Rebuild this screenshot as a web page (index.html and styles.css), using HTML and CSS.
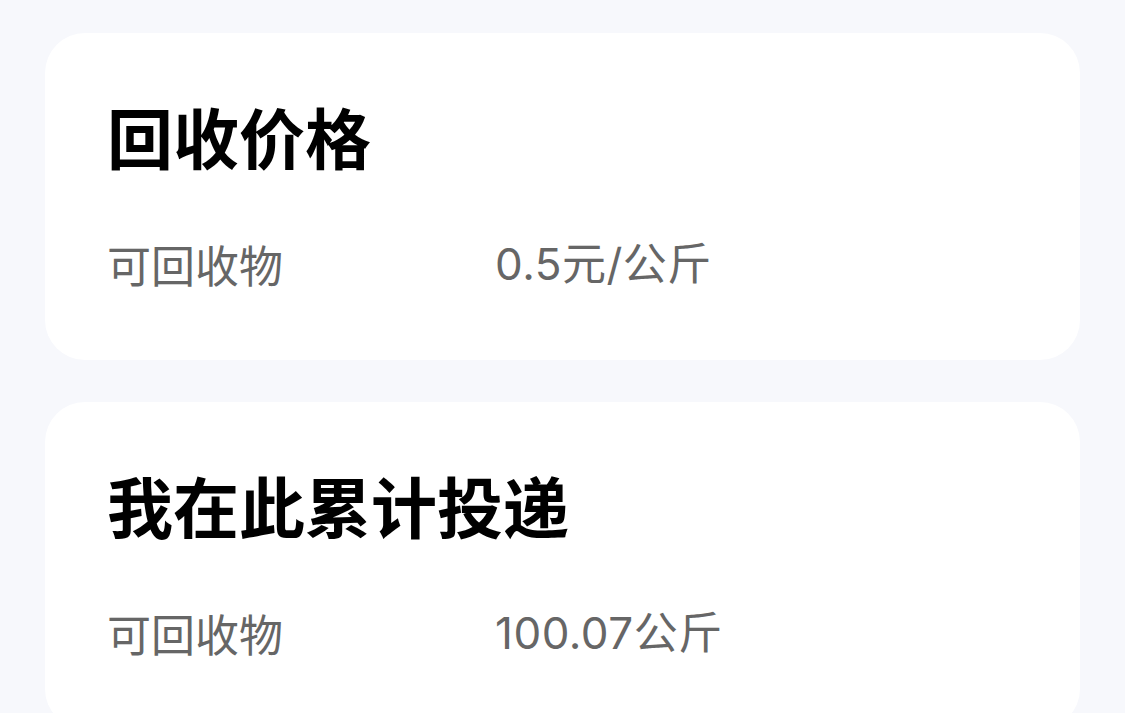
FILE: index.html
```html
<!DOCTYPE html>
<html lang="zh-CN">
<head>
    <meta charset="UTF-8">
    <title>回收价格</title>
    <link rel="stylesheet" href="styles.css">
</head>
<body>
<div class="page">
    <div class="card">
        <h2 class="card-title">回收价格</h2>
        <div class="row">
            <span class="label">可回收物</span>
            <span class="value">0.5元/公斤</span>
        </div>
    </div>
    <div class="card">
        <h2 class="card-title">我在此累计投递</h2>
        <div class="row">
            <span class="label">可回收物</span>
            <span class="value">100.07公斤</span>
        </div>
    </div>
</div>
</body>
</html>
```

FILE: styles.css
```css
* {
    padding: 0;
    margin: 0;
    box-sizing: border-box;
}

body {
    background: #f7f8fc;
    font-family: "Noto Sans CJK SC", "Noto Sans", sans-serif;
}

.page {
    display: flex;
    flex-direction: column;
    gap: 42px;
    padding: 33px 45px 0;
}

.card {
    background: #fff;
    border-radius: 40px;
    padding: 69px 62px 74px;
}

.card-title {
    font-size: 66px;
    line-height: 66px;
    font-weight: bold;
    color: #000;
}

.row {
    display: grid;
    grid-template-columns: 388px 1fr;
    margin-top: 74px;
    font-size: 44px;
    line-height: 44px;
    color: #666;
}

.value {
    font-family: Inter, "Noto Sans CJK SC", sans-serif;
    letter-spacing: 0.5px;
}
```
